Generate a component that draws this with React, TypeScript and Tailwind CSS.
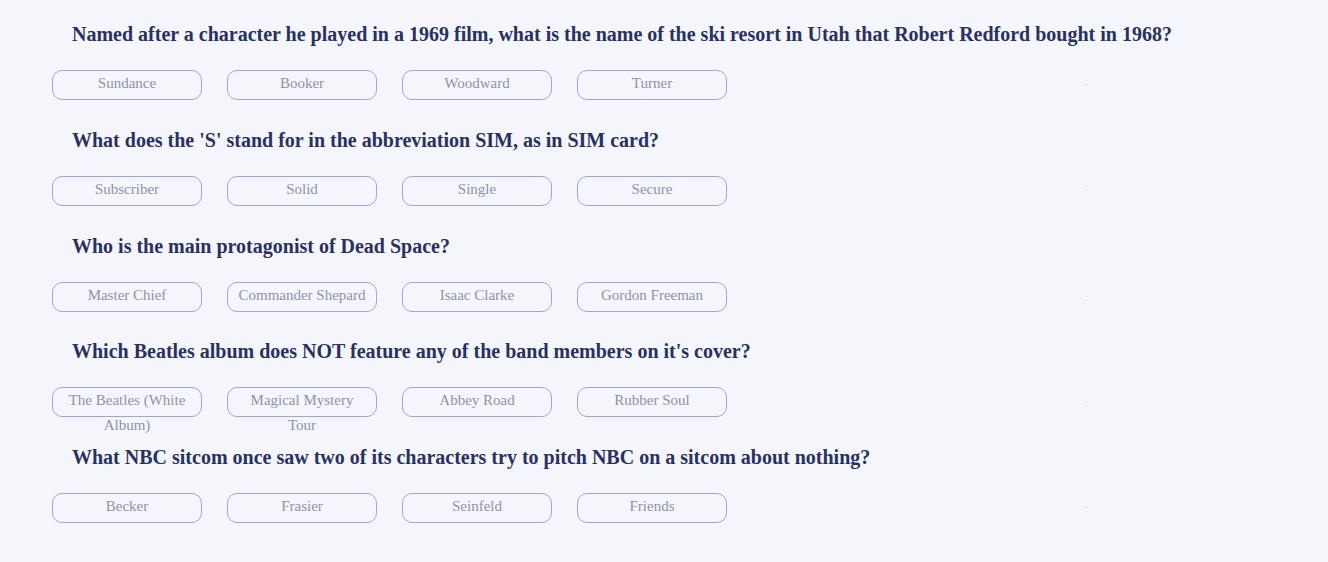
import React from "react";

const questions = [
  {
    q: "Named after a character he played in a 1969 film, what is the name of the ski resort in Utah that Robert Redford bought in 1968?",
    answers: ["Sundance", "Booker", "Woodward", "Turner"],
  },
  {
    q: "What does the 'S' stand for in the abbreviation SIM, as in SIM card?",
    answers: ["Subscriber", "Solid", "Single", "Secure"],
  },
  {
    q: "Who is the main protagonist of Dead Space?",
    answers: ["Master Chief", "Commander Shepard", "Isaac Clarke", "Gordon Freeman"],
  },
  {
    q: "Which Beatles album does NOT feature any of the band members on it's cover?",
    answers: ["The Beatles (White Album)", "Magical Mystery Tour", "Abbey Road", "Rubber Soul"],
  },
  {
    q: "What NBC sitcom once saw two of its characters try to pitch NBC on a sitcom about nothing?",
    answers: ["Becker", "Frasier", "Seinfeld", "Friends"],
  },
];

export default function App() {
  return (
    <div
      className="min-h-[562px] w-full bg-[#f5f6fb] pl-[52px] pt-[24px]"
      style={{ fontFamily: '"Liberation Serif", "Times New Roman", serif' }}
    >
      {questions.map((item) => (
        <div key={item.q} className="h-[105.75px]">
          <h2 className="pl-[20px] text-[20px] font-bold leading-[20px] text-[#283163]">{item.q}</h2>
          <div className="mt-[26px] flex items-start gap-[25px]">
            {item.answers.map((a) => (
              <button
                key={a}
                className="flex h-[30px] w-[150px] items-start justify-center rounded-[10px] border border-[#9ea6d8] bg-transparent px-[8px] text-center text-[15px] leading-[25px] text-[#8e92ab]"
                style={{ fontFamily: '"Liberation Serif", "Times New Roman", serif' }}
              >
                <span className="block">{a}</span>
              </button>
            ))}
            <span className="ml-[334px] mt-[14px] h-[1px] w-[1px] bg-[#c9cbe6]" />
          </div>
        </div>
      ))}
    </div>
  );
}
